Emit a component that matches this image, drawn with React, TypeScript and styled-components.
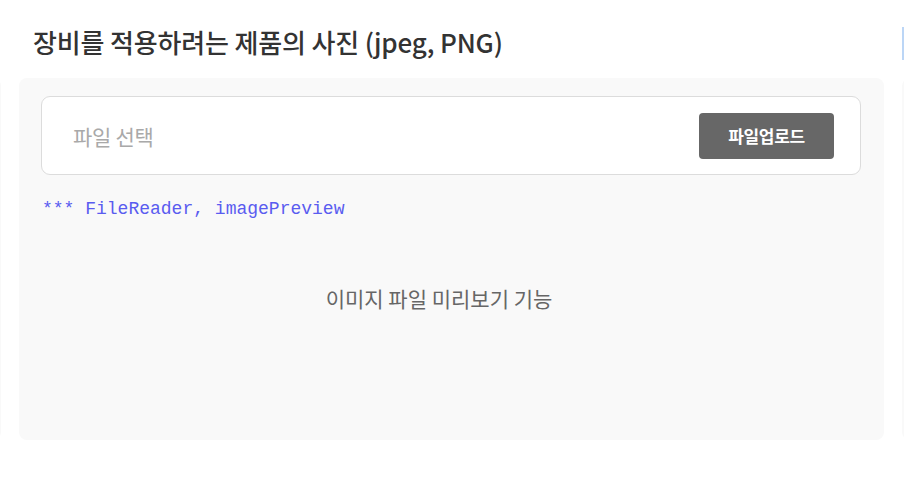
import React from "react";
import styled, { createGlobalStyle } from "styled-components";

const Global = createGlobalStyle`
  html, body { margin: 0; padding: 0; background: #ffffff; }
  body { font-family: "Noto Sans CJK KR", "Noto Sans", sans-serif; overflow: hidden; }
`;

const Viewport = styled.div`
  width: 904px;
  height: 482px;
  overflow: hidden;
`;

const Track = styled.div`
  display: flex;
  gap: 18px;
  margin-left: -864px;
  padding-top: 24px;
`;

const Slide = styled.section`
  flex: 0 0 865px;
  display: flex;
  flex-direction: column;
`;

const Title = styled.h2`
  margin: 0 0 0 14px;
  height: 54px;
  font-size: 26px;
  font-weight: 500;
  line-height: 36px;
  color: #333333;
  letter-spacing: -0.15px;
  white-space: nowrap;
`;

const TitleMarker = styled.div<{ $show?: boolean }>`
  height: 54px;
  box-sizing: border-box;
  padding-top: 3px;
  &::before {
    content: "";
    display: ${(p) => (p.$show ? "block" : "none")};
    width: 3px;
    height: 33px;
    background: #bcd6f6;
  }
`;

const Card = styled.div`
  height: 362px;
  box-sizing: border-box;
  background: #f9f9f9;
  border-radius: 8px;
  padding: 18px 23px 0 22px;
  display: flex;
  flex-direction: column;
`;

const FileBox = styled.div`
  height: 79px;
  box-sizing: border-box;
  background: #ffffff;
  border: 1px solid #dcdcdc;
  border-radius: 9px;
  display: flex;
  align-items: center;
  justify-content: space-between;
  padding: 0 26px 0 31px;
`;

const Placeholder = styled.span`
  font-size: 21px;
  color: #a9a9a9;
  letter-spacing: -0.3px;
`;

const UploadButton = styled.button`
  width: 135px;
  height: 46px;
  border: none;
  border-radius: 4px;
  background: #676767;
  color: #ffffff;
  font-family: "Noto Sans CJK KR", sans-serif;
  font-size: 17px;
  font-weight: 700;
  letter-spacing: -0.3px;
  padding: 0;
  cursor: pointer;
`;

const Note = styled.p`
  margin: 23px 0 0 1px;
  font-family: "Liberation Mono", monospace;
  font-size: 18px;
  line-height: 22px;
  color: #5a5cf0;
`;

const Preview = styled.div`
  margin-top: 63px;
  padding-right: 24px;
  text-align: center;
  font-size: 21px;
  line-height: 30px;
  color: #666666;
  letter-spacing: 0;
`;

function UploadSlide() {
  return (
    <Slide>
      <Title>장비를 적용하려는 제품의 사진 (jpeg, PNG)</Title>
      <Card>
        <FileBox>
          <Placeholder>파일 선택</Placeholder>
          <UploadButton>파일업로드</UploadButton>
        </FileBox>
        <Note>*** FileReader, imagePreview</Note>
        <Preview>이미지 파일 미리보기 기능</Preview>
      </Card>
    </Slide>
  );
}

function GhostSlide({ marker }: { marker?: boolean }) {
  return (
    <Slide aria-hidden>
      <TitleMarker $show={marker} />
      <Card />
    </Slide>
  );
}

export default function App() {
  return (
    <>
      <Global />
      <Viewport>
        <Track>
          <GhostSlide />
          <UploadSlide />
          <GhostSlide marker />
        </Track>
      </Viewport>
    </>
  );
}
